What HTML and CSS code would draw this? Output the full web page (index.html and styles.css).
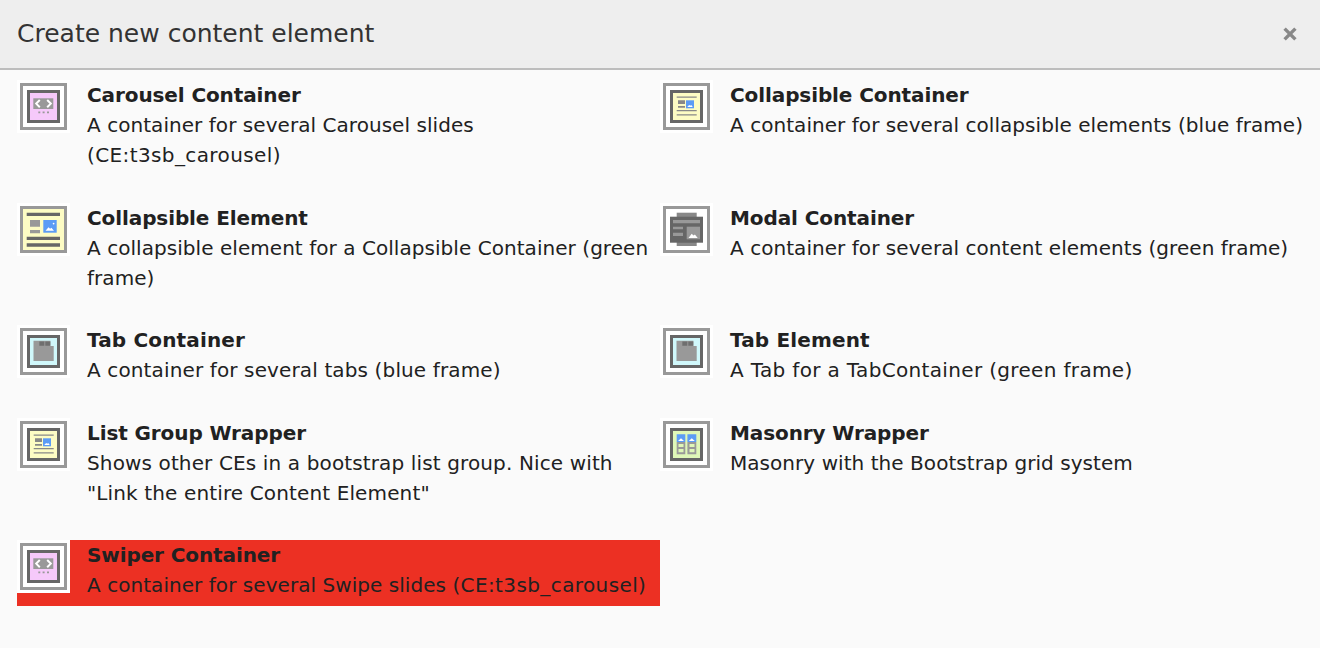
FILE: index.html
```html
<!DOCTYPE html>
<html lang="en">
<head>
<meta charset="utf-8">
<title>Create new content element</title>
<link rel="stylesheet" href="styles.css">
</head>
<body>
<svg class="defs" width="0" height="0" aria-hidden="true">
  <defs>
    <g id="frame"><rect x="1.5" y="1.5" width="44" height="44" fill="#fff" stroke="#999" stroke-width="3"/></g>
    <g id="code">
      <use href="#frame"/>
      <rect x="8.5" y="8.5" width="30" height="30" fill="#f6c9fa" stroke="#666" stroke-width="3"/>
      <rect x="13.3" y="15.3" width="20" height="10.7" fill="#999"/>
      <path d="M19.8 17l-3.6 3.6 3.6 3.6M27.2 17l3.6 3.6-3.6 3.6" fill="none" stroke="#fff" stroke-width="2"/>
      <path d="M18.3 28.6h2v1.6h-2zM22.6 28.6h2v1.6h-2zM27 28.6h2v1.6h-2z" fill="#999"/>
    </g>
    <g id="article">
      <use href="#frame"/>
      <rect x="8.5" y="8.5" width="30" height="30" fill="#fdfcc4" stroke="#666" stroke-width="3"/>
      <path d="M13.7 13.5h20v1.3h-20zM15 17.3h7v3.6h-7zM15 23h7v1.8h-7zM13.7 27h20v1.3h-20zM13.7 31.2h20v1.3h-20z" fill="#888"/>
      <rect x="23" y="17.3" width="8" height="8" fill="#5c9cf5"/>
      <path d="M24.2 24l2-2 1 .8 1-.8 1.6 2z" fill="#fff"/>
    </g>
    <g id="collapse">
      <rect x="1.5" y="1.5" width="44" height="44" fill="#fdfcc4" stroke="#999" stroke-width="3"/>
      <path d="M6.7 6.7H40v3.4H6.7zM6.7 30.7H40V34H6.7zM6.7 37.3H40v3.4H6.7z" fill="#666"/>
      <path d="M10 14h10v6.7H10zM10 24h10v3.3H10z" fill="#999"/>
      <rect x="23.3" y="14" width="13.4" height="12.7" fill="#5c9cf5"/>
      <path d="M25.5 24.8l3-3.6 1.6 1.5 1.3-1 2.6 3.1z" fill="#fff"/>
      <circle cx="33.6" cy="17.6" r=".9" fill="#fff"/>
    </g>
    <g id="modal">
      <use href="#frame"/>
      <rect x="13.7" y="6.7" width="20" height="33.3" fill="#888"/>
      <rect x="7" y="10.7" width="33" height="26" fill="#666"/>
      <path d="M10 14h27v3.3H10zM10 20.7h10v2.6H10zM10 26.7h10V30H10z" fill="#999"/>
      <rect x="23.7" y="20.7" width="13.3" height="12.6" fill="#999"/>
      <path d="M25.5 32l3.2-4.3 1.8 1.8 1.4-1 2.8 3.5z" fill="#fff"/>
    </g>
    <g id="tab">
      <use href="#frame"/>
      <rect x="8.5" y="8.5" width="30" height="30" fill="#d0f8fb" stroke="#666" stroke-width="3"/>
      <path d="M13.5 12.7h16.9V18h3.3v15H13.5z" fill="#999"/>
      <path d="M19.3 13.5h5v4.2h-5zM25.3 13.5h5v4.2h-5z" fill="#6f6f6f"/>
    </g>
    <g id="masonry">
      <use href="#frame"/>
      <rect x="8.5" y="8.5" width="30" height="30" fill="#dff7b8" stroke="#666" stroke-width="3"/>
      <path d="M13.7 13.3h8.6v7.7h-8.6zM24.4 13.3h8.9v7.7h-8.9z" fill="#5c9cf5"/>
      <path d="M13.7 21h8.6v12.3h-8.6zM24.4 21h8.9v12.3h-8.9z" fill="#999"/>
      <path d="M15.5 23h5v3h-5zM15.5 28h5v3.3h-5zM26.5 23h5v3h-5zM26.5 28h5v3.3h-5z" fill="#dff7b8"/>
      <path d="M15 20l3-2.8 3 2.8zM25.8 20l3-2.8 3 2.8z" fill="#fff"/>
    </g>
  </defs>
</svg>
<header class="head">
  <h1 class="title">Create new content element</h1>
  <button class="close" type="button" aria-label="Close">
    <svg width="16" height="16" viewBox="0 0 16 16"><path d="M2.6 2.6l10.8 10.8M13.4 2.6L2.6 13.4" stroke="#888" stroke-width="3.4" fill="none"/></svg>
  </button>
</header>
<main class="grid">
  <a class="item"><span class="ico"><svg width="47" height="47" viewBox="0 0 47 47"><use href="#code"/></svg></span><span class="txt"><b>Carousel Container</b><span>A container for several Carousel slides <span class="token">(CE:t3sb_carousel)</span></span></span></a>
  <a class="item"><span class="ico"><svg width="47" height="47" viewBox="0 0 47 47"><use href="#article"/></svg></span><span class="txt"><b>Collapsible Container</b><span>A container for several collapsible elements (blue frame)</span></span></a>
  <a class="item"><span class="ico"><svg width="47" height="47" viewBox="0 0 47 47"><use href="#collapse"/></svg></span><span class="txt"><b>Collapsible Element</b><span>A collapsible element for a Collapsible Container (green frame)</span></span></a>
  <a class="item"><span class="ico"><svg width="47" height="47" viewBox="0 0 47 47"><use href="#modal"/></svg></span><span class="txt"><b>Modal Container</b><span>A container for several content elements (green frame)</span></span></a>
  <a class="item"><span class="ico"><svg width="47" height="47" viewBox="0 0 47 47"><use href="#tab"/></svg></span><span class="txt"><b class="open">Tab Container</b><span class="loose">A container for several tabs (blue frame)</span></span></a>
  <a class="item"><span class="ico"><svg width="47" height="47" viewBox="0 0 47 47"><use href="#tab"/></svg></span><span class="txt"><b class="open">Tab Element</b><span class="wide">A Tab for a TabContainer (green frame)</span></span></a>
  <a class="item"><span class="ico"><svg width="47" height="47" viewBox="0 0 47 47"><use href="#article"/></svg></span><span class="txt"><b>List Group Wrapper</b><span class="loose">Shows other CEs in a bootstrap list group. Nice with "Link the entire Content Element"</span></span></a>
  <a class="item"><span class="ico"><svg width="47" height="47" viewBox="0 0 47 47"><use href="#masonry"/></svg></span><span class="txt"><b>Masonry Wrapper</b><span>Masonry with the Bootstrap grid system</span></span></a>
  <a class="item active"><span class="ico"><svg width="47" height="47" viewBox="0 0 47 47"><use href="#code"/></svg></span><span class="txt"><b>Swiper Container</b><span>A container for several Swipe slides <span class="token">(CE:t3sb_carousel)</span></span></span></a>
</main>
</body>
</html>
```

FILE: styles.css
```css
html, body {
  margin: 0;
  height: 648px;
  overflow: hidden;
  background: #fafafa;
  color: #212121;
  font-family: "DejaVu Sans", Verdana, sans-serif;
  font-size: 20px;
  line-height: 30px;
  letter-spacing: 0.05px;
}
.defs { position: absolute; }
.head {
  box-sizing: border-box;
  height: 70px;
  padding: 0 22px 0 17px;
  display: flex;
  align-items: center;
  justify-content: space-between;
  background: #eeeeee;
  border-bottom: 2px solid #bdbdbd;
}
.title {
  margin: 0;
  font-size: 25px;
  font-weight: 400;
  letter-spacing: 0;
  color: #333;
}
.close {
  padding: 0;
  border: 0;
  background: none;
  display: flex;
}
.grid {
  display: grid;
  grid-template-columns: 643px 660px;
  row-gap: 26.5px;
  padding: 10px 0 0 17px;
}
.item {
  display: flex;
  align-items: flex-start;
  padding-bottom: 6px;
  padding-right: 8px;
}
.ico {
  flex: none;
  box-sizing: border-box;
  width: 53px;
  height: 53px;
  padding: 3px;
  background: #fff;
  display: flex;
}
.txt {
  margin-left: 17px;
  display: flex;
  flex-direction: column;
}
.txt b {
  font-weight: 700;
  letter-spacing: -0.1px;
}
.txt b.open { letter-spacing: 0.15px; }
.loose { letter-spacing: 0.13px; }
.wide { letter-spacing: 0.34px; }
.token { letter-spacing: 0.39px; }
.active { background: #ec3023; }
```
